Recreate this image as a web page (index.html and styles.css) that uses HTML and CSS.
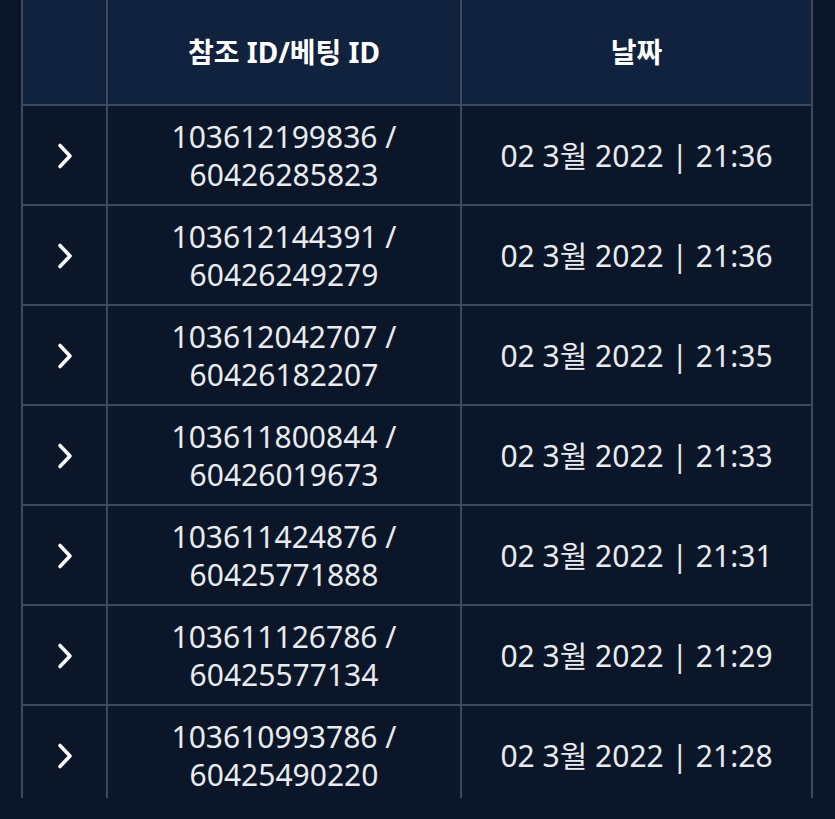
FILE: index.html
```html
<!DOCTYPE html>
<html lang="ko">
<head>
<meta charset="utf-8">
<title>베팅 내역</title>
<link rel="stylesheet" href="styles.css">
</head>
<body>
<div class="scroller">
  <div class="grid">
    <div class="hcell"></div>
    <div class="hcell">참조 ID/베팅 ID</div>
    <div class="hcell">날짜</div>

    <div class="cell chev"><svg viewBox="0 0 18 28" width="18" height="28"><path d="M4 3.5 L14 14 L4 24.5"/></svg></div>
    <div class="cell ids">103612199836 /<br>60426285823</div>
    <div class="cell date">02 3월 2022 | 21:36</div>

    <div class="cell chev"><svg viewBox="0 0 18 28" width="18" height="28"><path d="M4 3.5 L14 14 L4 24.5"/></svg></div>
    <div class="cell ids">103612144391 /<br>60426249279</div>
    <div class="cell date">02 3월 2022 | 21:36</div>

    <div class="cell chev"><svg viewBox="0 0 18 28" width="18" height="28"><path d="M4 3.5 L14 14 L4 24.5"/></svg></div>
    <div class="cell ids">103612042707 /<br>60426182207</div>
    <div class="cell date">02 3월 2022 | 21:35</div>

    <div class="cell chev"><svg viewBox="0 0 18 28" width="18" height="28"><path d="M4 3.5 L14 14 L4 24.5"/></svg></div>
    <div class="cell ids">103611800844 /<br>60426019673</div>
    <div class="cell date">02 3월 2022 | 21:33</div>

    <div class="cell chev"><svg viewBox="0 0 18 28" width="18" height="28"><path d="M4 3.5 L14 14 L4 24.5"/></svg></div>
    <div class="cell ids">103611424876 /<br>60425771888</div>
    <div class="cell date">02 3월 2022 | 21:31</div>

    <div class="cell chev"><svg viewBox="0 0 18 28" width="18" height="28"><path d="M4 3.5 L14 14 L4 24.5"/></svg></div>
    <div class="cell ids">103611126786 /<br>60425577134</div>
    <div class="cell date">02 3월 2022 | 21:29</div>

    <div class="cell chev"><svg viewBox="0 0 18 28" width="18" height="28"><path d="M4 3.5 L14 14 L4 24.5"/></svg></div>
    <div class="cell ids">103610993786 /<br>60425490220</div>
    <div class="cell date">02 3월 2022 | 21:28</div>
  </div>
</div>
</body>
</html>
```
FILE: styles.css
```css
html, body {
  margin: 0;
  padding: 0;
  background: #0b1628;
}
body {
  font-family: "Noto Sans", "Noto Sans CJK KR", sans-serif;
  color: #e8ecf1;
}
.scroller {
  margin-left: 21px;
  width: 792px;
  height: 798px;
  overflow: hidden;
}
.grid {
  display: grid;
  grid-template-columns: 87px 354px 351px;
  grid-auto-rows: 100px;
  grid-template-rows: 106px;
}
.hcell, .cell {
  box-sizing: border-box;
  border-right: 2px solid #3a4a5f;
  border-bottom: 2px solid #3a4a5f;
  display: flex;
  align-items: center;
  justify-content: center;
  text-align: center;
}
.hcell:first-child, .cell.chev {
  border-left: 2px solid #3a4a5f;
}
.hcell {
  background: #10223e;
  color: #ffffff;
  font-weight: 700;
  font-size: 28px;
  padding-bottom: 2px;
}
.cell {
  background: #0b1628;
  font-size: 30px;
  line-height: 38px;
  padding-top: 2px;
}
.chev svg {
  fill: none;
  stroke: #ffffff;
  stroke-width: 3.6;
  stroke-linecap: round;
  stroke-linejoin: round;
}
```
